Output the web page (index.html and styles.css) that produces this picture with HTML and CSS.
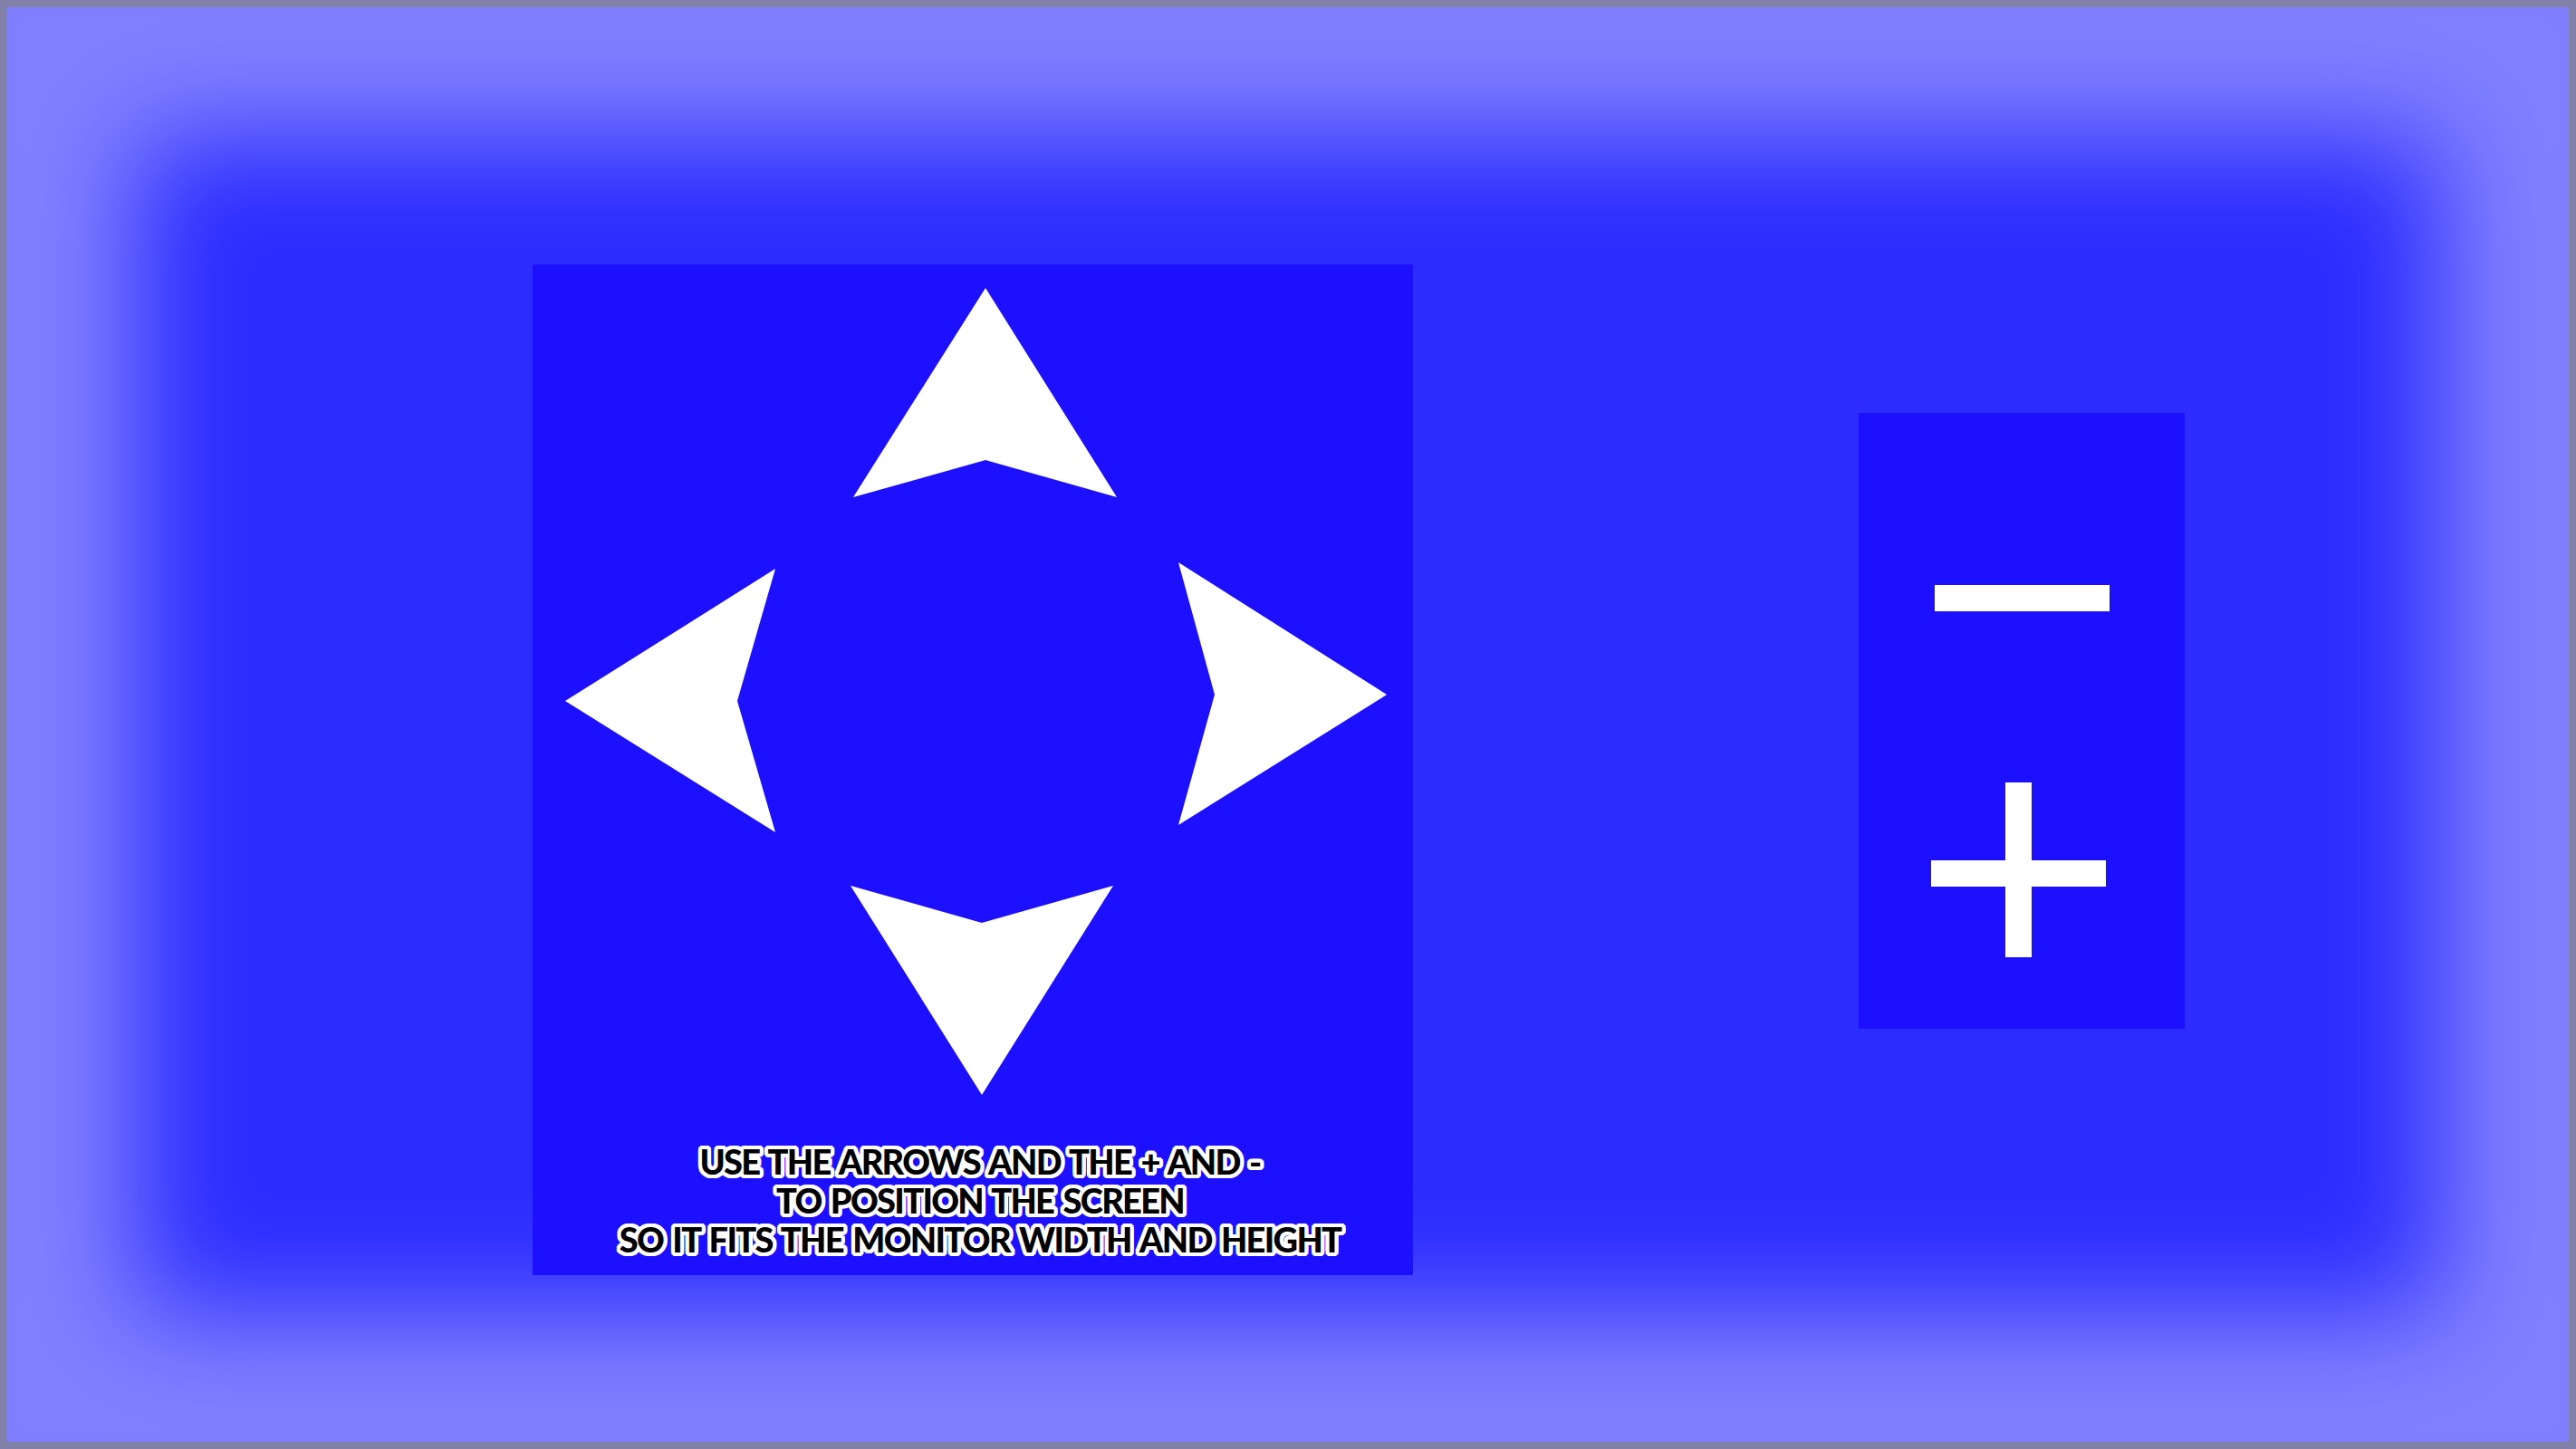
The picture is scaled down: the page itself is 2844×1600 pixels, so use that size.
FILE: index.html
```html
<!DOCTYPE html>
<html lang="en">
<head>
<meta charset="utf-8">
<title>Screen position</title>
<link rel="stylesheet" href="styles.css">
</head>
<body>
<main class="screen">
  <section class="pad">
    <svg class="dpad" width="972" height="940" viewBox="0 0 972 940" aria-hidden="true">
      <polygon points="500,26 645,257 500,216 354,257" fill="#fff"/>
      <polygon points="36,482 268,336 226,482 268,627" fill="#fff"/>
      <polygon points="943,475 713,329 753,475 713,619" fill="#fff"/>
      <polygon points="496,917 351,686 496,727 641,686" fill="#fff"/>
    </svg>
    <p class="hint">USE THE ARROWS AND THE + AND -<br>TO POSITION THE SCREEN<br>SO IT FITS THE MONITOR WIDTH AND HEIGHT</p>
  </section>
  <section class="zoom">
    <div class="minus"></div>
    <svg class="plus" width="193" height="193" viewBox="0 0 193 193" aria-hidden="true">
      <rect x="82" y="0" width="29" height="193" fill="#fff"/>
      <rect x="0" y="86" width="193" height="29" fill="#fff"/>
    </svg>
  </section>
</main>
</body>
</html>
```
FILE: styles.css
```css
html {
  background: #8080a8;
}

body {
  margin: 0;
  padding: 8px;
  width: 2844px;
  height: 1600px;
  box-sizing: border-box;
  overflow: hidden;
}

.screen {
  box-sizing: border-box;
  height: 1584px;
  background: #2c2cff;
  box-shadow: inset 0 0 120px 145px #8080ff;
  display: flex;
  align-items: flex-start;
  padding: 284px 0 0 580px;
}

.pad {
  width: 972px;
  height: 1116px;
  background: #1d10ff;
  display: flex;
  flex-direction: column;
  flex: none;
}

.dpad {
  display: block;
}

.hint {
  margin: 29px 0 0;
  padding-left: 16px;
  text-align: center;
  font-family: "Lato", "Liberation Sans", sans-serif;
  font-weight: 900;
  font-size: 38px;
  letter-spacing: -1.7px;
  word-spacing: 3px;
  line-height: 43px;
  color: #000;
  text-shadow:
    4px 0 0 #fff, -4px 0 0 #fff, 0 4px 0 #fff, 0 -4px 0 #fff,
    3px 3px 0 #fff, -3px 3px 0 #fff, 3px -3px 0 #fff, -3px -3px 0 #fff,
    4px 2px 0 #fff, -4px 2px 0 #fff, 4px -2px 0 #fff, -4px -2px 0 #fff,
    2px 4px 0 #fff, -2px 4px 0 #fff, 2px -4px 0 #fff, -2px -4px 0 #fff,
    2px 0 0 #fff, -2px 0 0 #fff, 0 2px 0 #fff, 0 -2px 0 #fff;
}

.zoom {
  flex: none;
  width: 360px;
  height: 680px;
  margin: 164px 0 0 492px;
  background: #1d10ff;
  display: flex;
  flex-direction: column;
  align-items: flex-start;
}

.minus {
  width: 193px;
  height: 29px;
  margin: 190px 0 0 84px;
  background: #fff;
}

.plus {
  display: block;
  margin: 189px 0 0 80px;
}
```
